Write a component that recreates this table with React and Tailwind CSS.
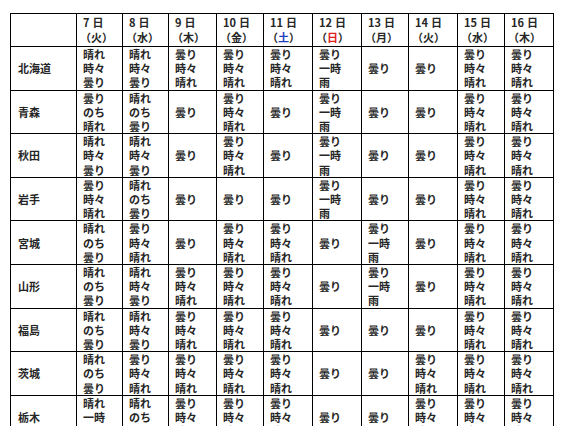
import React from "react";

const days = [
  { d: "7", w: "火" },
  { d: "8", w: "水" },
  { d: "9", w: "木" },
  { d: "10", w: "金" },
  { d: "11", w: "土", color: "text-[#1f3fbf]" },
  { d: "12", w: "日", color: "text-[#e0201c]" },
  { d: "13", w: "月" },
  { d: "14", w: "火" },
  { d: "15", w: "水" },
  { d: "16", w: "木" },
];

const widths = [
  "w-[66px]",
  "w-[46px]",
  "w-[46px]",
  "w-[48px]",
  "w-[47px]",
  "w-[49px]",
  "w-[49px]",
  "w-[47px]",
  "w-[49px]",
  "w-[47px]",
  "w-[49px]",
];

const A = ["晴れ", "時々", "曇り"]; // 晴れ時々曇り
const B = ["曇り", "時々", "晴れ"]; // 曇り時々晴れ
const C = ["晴れ", "のち", "曇り"];
const D = ["曇り", "のち", "晴れ"];
const R = ["曇り", "一時", "雨"];
const K = ["曇り"];
const S = ["晴れ", "一時", "雨"];

const rows = [
  { name: "北海道", cells: [A, A, B, B, B, R, K, K, B, B] },
  { name: "青森", cells: [D, C, K, B, K, R, K, K, B, B] },
  { name: "秋田", cells: [A, A, K, B, K, R, K, K, B, B] },
  { name: "岩手", cells: [B, C, K, K, K, R, K, K, B, B] },
  { name: "宮城", cells: [C, B, K, B, B, K, R, K, B, B] },
  { name: "山形", cells: [C, A, B, B, B, K, R, K, B, B] },
  { name: "福島", cells: [C, A, B, B, B, K, K, K, B, B] },
  { name: "茨城", cells: [C, B, B, B, B, K, K, B, B, B] },
  { name: "栃木", cells: [S, C, B, B, B, K, K, B, B, B] },
];

export default function App() {
  return (
    <div
      className="w-[564px] h-[426px] overflow-hidden bg-white pt-[13px] pl-[10px] text-[11px] text-[#262626]"
      style={{ fontFamily: '"Noto Sans CJK JP", "Noto Sans", sans-serif' }}
    >
      <table className="table-fixed border-collapse w-[544px]">
        <colgroup>
          {widths.map((w, i) => (
            <col key={i} className={w} />
          ))}
        </colgroup>
        <thead>
          <tr className="h-[33px]">
            <th className="border border-black"></th>
            {days.map((day, i) => (
              <th
                key={i}
                className="border border-black text-left font-bold leading-[15px] pl-[6px] align-middle"
              >
                <div>
                  {day.d}
                  <span className="ml-[3px]">日</span>
                </div>
                <div className="-ml-[3px]">
                  （<span className={day.color || ""}>{day.w}</span>）
                </div>
              </th>
            ))}
          </tr>
        </thead>
        <tbody>
          {rows.map((row, i) => (
            <tr key={i}>
              <td className="border border-black pl-[7px] font-bold align-middle leading-[14.2px]">
                {row.name}
              </td>
              {row.cells.map((c, j) => (
                <td
                  key={j}
                  className="border border-black pl-[6px] py-0 font-bold align-middle leading-[14.2px]"
                >
                  {c.map((t, k) => (
                    <div key={k}>{t}</div>
                  ))}
                </td>
              ))}
            </tr>
          ))}
        </tbody>
      </table>
    </div>
  );
}
